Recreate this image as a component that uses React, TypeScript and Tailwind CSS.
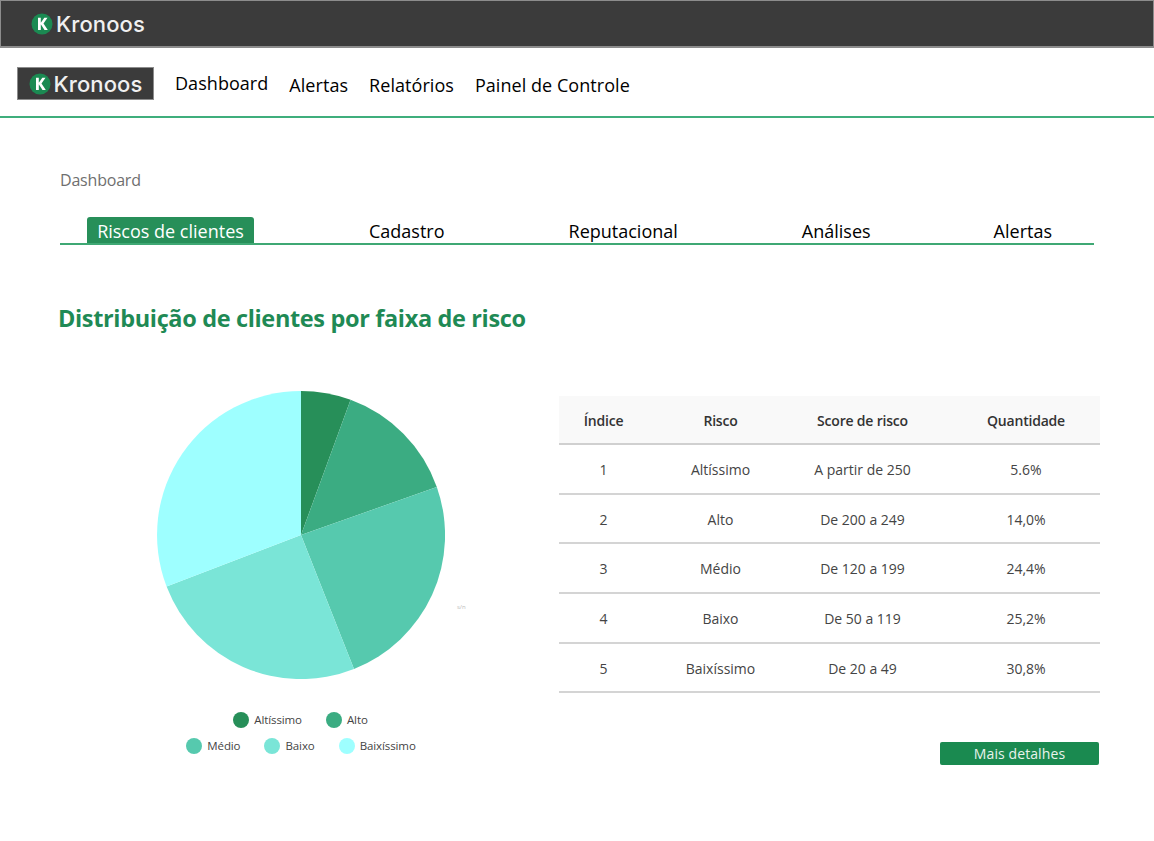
const FONT = "[font-family:'Open_Sans','Noto_Sans',sans-serif]"

const TABS = ['Riscos de clientes', 'Cadastro', 'Reputacional', 'Análises', 'Alertas']

const ROWS = [
  ['1', 'Altíssimo', 'A partir de 250', '5.6%'],
  ['2', 'Alto', 'De 200 a 249', '14,0%'],
  ['3', 'Médio', 'De 120 a 199', '24,4%'],
  ['4', 'Baixo', 'De 50 a 119', '25,2%'],
  ['5', 'Baixíssimo', 'De 20 a 49', '30,8%'],
]

function Logo() {
  return (
    <div className="flex items-center gap-[3px]">
      <svg width="22" height="22" viewBox="0 0 22 22">
        <circle cx="11" cy="11" r="10.5" fill="#1b8a52" />
        <path d="M7 4.8h2.8v5l3.5-5h3.2l-4 5.6 4.3 6.6h-3.3l-3.7-5.8V17H7z" fill="#ffffff" />
      </svg>
      <span className="font-['Inter',sans-serif] text-[22px] font-medium leading-none tracking-[0.1px] text-[#f0f0f0]">
        Kronoos
      </span>
    </div>
  )
}

function PieChart() {
  return (
    <svg width="288" height="288" viewBox="-144 -144 288 288">
      <path d="M0 0L0 -144A144 144 0 0 1 49.6 -135.2Z" fill="#278f59" />
      <path d="M0 0L49.6 -135.2A144 144 0 0 1 135.8 -48Z" fill="#3bac82" />
      <path d="M0 0L135.8 -48A144 144 0 0 1 53 134Z" fill="#56c9ae" />
      <path d="M0 0L53 134A144 144 0 0 1 -134.4 51.6Z" fill="#7ae5d7" />
      <path d="M0 0L-134.4 51.6A144 144 0 0 1 0 -144Z" fill="#9effff" />
    </svg>
  )
}

function LegendItem({ color, label }: { color: string; label: string }) {
  return (
    <div className="flex items-center gap-[5px]">
      <span className={`h-4 w-4 rounded-full ${color}`} />
      <span className="text-[11.5px] leading-none tracking-[-0.1px] text-[#444]">{label}</span>
    </div>
  )
}

export default function App() {
  return (
    <div className={`h-[841px] w-[1154px] overflow-hidden bg-white ${FONT}`}>
      <div className="flex h-12 items-center border border-b-2 border-[#8c8c8c] bg-[#3b3b3b] pl-[30px]">
        <Logo />
      </div>

      <nav className="flex h-[70px] items-center border-b-2 border-[#3fae7c] pl-[17px]">
        <div className="mt-[3px] flex h-[33px] w-[137px] items-center justify-center border border-[#8c8c8c] bg-[#3b3b3b]">
          <Logo />
        </div>
        <div className="ml-[21px] mt-[5px] flex items-center gap-[21px] text-[18px] leading-none tracking-[0.05px] text-black">
          <span className="-mt-[3px]">Dashboard</span>
          <span>Alertas</span>
          <span>Relatórios</span>
          <span>Painel de Controle</span>
        </div>
      </nav>

      <main className="px-[60px] pt-[52px]">
        <p className="text-[16px] leading-5 tracking-[-0.2px] text-[#6f6f6f]">Dashboard</p>

        <div className="mt-[27px] flex h-[28px] w-[1034px] items-end border-b-2 border-[#3fa874] pl-[27px] text-[18px] leading-none text-black">
          <span className="flex h-[26px] w-[167px] items-center justify-center rounded-t-[3px] bg-[#278f59] pt-[1px] text-white">
            {TABS[0]}
          </span>
          <span className="mb-[1px] ml-[115px] h-[20px]">{TABS[1]}</span>
          <span className="mb-[1px] ml-[124px] h-[20px]">{TABS[2]}</span>
          <span className="mb-[1px] ml-[124px] h-[20px]">{TABS[3]}</span>
          <span className="mb-[1px] ml-[123px] h-[20px]">{TABS[4]}</span>
        </div>

        <h1 className="-ml-[2px] mt-[57px] text-[23.5px] font-bold leading-8 tracking-[-0.35px] text-[#1f8a55]">
          Distribuição de clientes por faixa de risco
        </h1>

        <div className="mt-[56px] flex">
          <div className="relative flex w-[499px] shrink-0 flex-col items-center pr-[17px] pt-[1px]">
            <PieChart />
            <span className="absolute left-[397px] top-[214px] text-[6px] leading-none text-[#bbb]">s/n</span>
            <div className="mt-[33px] flex gap-[24px] pr-[1px]">
              <LegendItem color="bg-[#278f59]" label="Altíssimo" />
              <LegendItem color="bg-[#3bac82]" label="Alto" />
            </div>
            <div className="mt-[10px] flex gap-[24px]">
              <LegendItem color="bg-[#56c9ae]" label="Médio" />
              <LegendItem color="bg-[#7ae5d7]" label="Baixo" />
              <LegendItem color="bg-[#9effff]" label="Baixíssimo" />
            </div>
          </div>

          <div className="w-[541px] shrink-0 pt-[6px]">
            <div className="grid h-[49px] grid-cols-[89px_145px_139px_168px] items-center border-b-2 border-[#d0d0d0] bg-[#f9f9f9] pt-[1px] text-center text-[14px] font-semibold tracking-[-0.2px] text-[#333]">
              <span>Índice</span>
              <span>Risco</span>
              <span>Score de risco</span>
              <span className="pl-5">Quantidade</span>
            </div>
            {ROWS.map((row) => (
              <div
                key={row[0]}
                className="grid h-[49.7px] grid-cols-[89px_145px_139px_168px] items-center border-b-2 border-[#d4d4d4] pt-[1px] text-center text-[14px] text-[#444]"
              >
                <span>{row[0]}</span>
                <span>{row[1]}</span>
                <span>{row[2]}</span>
                <span className="pl-5">{row[3]}</span>
              </div>
            ))}
            <div className="mt-[49px] flex justify-end pr-[1px]">
              <button
                type="button"
                className="h-[23px] w-[159px] rounded-[2px] bg-[#1a8a50] text-[14px] leading-none tracking-[0.1px] text-[#e8f3ec]"
              >
                Mais detalhes
              </button>
            </div>
          </div>
        </div>
      </main>
    </div>
  )
}
